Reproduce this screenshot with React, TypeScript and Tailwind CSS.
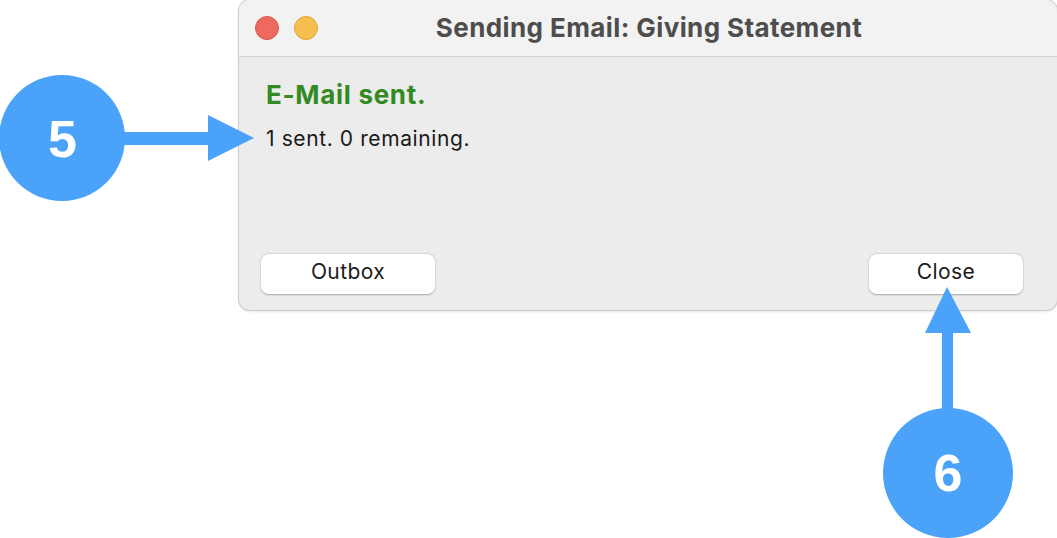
import React from "react";

export default function App() {
  const blue = "#4aa3f8";
  return (
    <div className="relative w-[1057px] h-[538px] bg-white overflow-hidden" style={{ fontFamily: "Inter, 'Noto Sans', sans-serif" }}>
      <div className="ml-[239px] w-[818px] h-[310px] flex flex-col rounded-[11px] bg-[#ececec] shadow-[0_0_0_1px_#cfcfcf,0_1px_3px_rgba(0,0,0,0.2)] overflow-hidden">
        <div className="relative h-[57px] shrink-0 bg-[#f2f2f2] border-b border-[#d2d2d2] flex items-center justify-center">
          <div className="absolute left-[16px] top-[16px] flex gap-[15px]">
            <div className="w-[24px] h-[24px] rounded-full bg-[#ee6a5f] border border-[#d9574d]" />
            <div className="w-[24px] h-[24px] rounded-full bg-[#f5be4f] border border-[#dea63b]" />
          </div>
          <div className="text-[26px] font-bold text-[#4d4d4d] tracking-[0.4px] ml-[2px] leading-[32px]">Sending Email: Giving Statement</div>
        </div>
        <div className="flex-1 flex flex-col pl-[27px] pr-[22px] pt-[21px] pb-[16px]">
          <div className="text-[26px] font-bold text-[#338a22] leading-[34px] tracking-[0.7px]">E-Mail sent.</div>
          <div className="text-[21px] text-[#1a1a1a] leading-[28px] mt-[13px] tracking-[0.6px]">1 sent. 0 remaining.</div>
          <div className="mt-auto flex justify-between items-end -ml-[5px]">
            <button className="w-[174px] h-[40px] pb-[5px] rounded-[8px] bg-white shadow-[0_0.5px_2px_rgba(0,0,0,0.3)] text-[21px] tracking-[0.4px] text-[#1a1a1a]">Outbox</button>
            <button className="w-[154px] h-[40px] pb-[5px] rounded-[8px] bg-white shadow-[0_0.5px_2px_rgba(0,0,0,0.3)] text-[21px] tracking-[0.4px] text-[#1a1a1a] mr-[12px]">Close</button>
          </div>
        </div>
      </div>

      <svg className="absolute left-0 top-0" width="1057" height="538" viewBox="0 0 1057 538">
        <circle cx="62" cy="138" r="63" fill={blue} />
        <rect x="120" y="132" width="92" height="13" fill={blue} />
        <polygon points="208,115 254,138 208,161" fill={blue} />
        <circle cx="948" cy="473" r="65" fill={blue} />
        <rect x="942" y="328" width="11" height="90" fill={blue} />
        <polygon points="947,287 971,333 925,333" fill={blue} />
      </svg>
      <div className="absolute left-0 top-[75px] w-[125px] h-[128px] flex items-center justify-center text-white font-bold text-[52px]" style={{ fontFamily: "'Liberation Sans', Arial, sans-serif" }}>5</div>
      <div className="absolute left-[883px] top-[408px] w-[130px] h-[130px] flex items-center justify-center text-white font-bold text-[52px]" style={{ fontFamily: "'Liberation Sans', Arial, sans-serif" }}>6</div>
    </div>
  );
}
